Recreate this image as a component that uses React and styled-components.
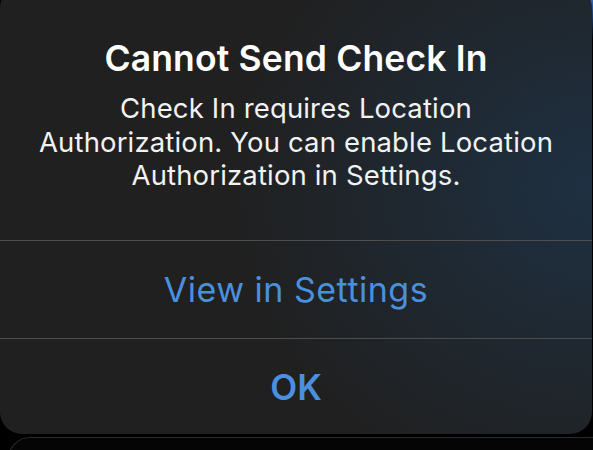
import styled, { createGlobalStyle } from "styled-components";

const GlobalStyle = createGlobalStyle`
  html, body {
    margin: 0;
    padding: 0;
    background: #000;
  }
  body {
    font-family: Inter, "Noto Sans", "Liberation Sans", sans-serif;
    -webkit-font-smoothing: antialiased;
  }
`;

const Screen = styled.div`
  position: relative;
  width: 593px;
  height: 450px;
  overflow: hidden;
  background: radial-gradient(circle at 100% 0%, #2f6bb8 0, #1d3f6e 14px, #000 40px);
`;

const Alert = styled.div`
  width: 592px;
  margin-top: -14px;
  height: 448px;
  border-radius: 22px;
  overflow: hidden;
  display: flex;
  flex-direction: column;
  background:
    radial-gradient(ellipse 360px 320px at 100% 45%, rgba(30, 50, 70, 0.9), rgba(30, 50, 70, 0) 100%),
    #202020;
`;

const Header = styled.div`
  height: 254px;
  box-sizing: border-box;
  padding-top: 53px;
  text-align: center;
  color: #fff;
`;

const Title = styled.h1`
  margin: 0 0 13px;
  font-size: 35.5px;
  line-height: 40px;
  font-weight: 600;
  letter-spacing: 0.15px;
`;

const Message = styled.p`
  margin: 0;
  font-size: 27.5px;
  line-height: 33.7px;
  font-weight: 400;
  letter-spacing: 0.15px;
  color: #f2f2f2;
`;

const Divider = styled.div`
  height: 1px;
  background: #4e4e4e;
`;

const Action = styled.button`
  height: ${(p) => p.$height}px;
  border: 0;
  padding: 0;
  background: transparent;
  color: #4b8fdf;
  font-family: inherit;
  font-size: ${(p) => (p.$bold ? 35 : 34)}px;
  font-weight: ${(p) => (p.$bold ? 600 : 400)};
  letter-spacing: ${(p) => (p.$bold ? 0 : 0.5)}px;
  display: flex;
  align-items: center;
  justify-content: center;
`;

const NextSheet = styled.div`
  margin: 3px 0 0 8px;
  height: 40px;
  border-top: 1px solid #2a2a2a;
  border-left: 1px solid #2a2a2a;
  border-top-left-radius: 22px;
  background: #050505;
`;

export default function App() {
  return (
    <>
      <GlobalStyle />
      <Screen>
        <Alert>
          <Header>
            <Title>Cannot Send Check In</Title>
            <Message>
              Check In requires Location
              <br />
              Authorization. You can enable Location
              <br />
              Authorization in Settings.
            </Message>
          </Header>
          <Divider />
          <Action $height={97}>View in Settings</Action>
          <Divider />
          <Action $height={95} $bold>
            OK
          </Action>
        </Alert>
        <NextSheet />
      </Screen>
    </>
  );
}
